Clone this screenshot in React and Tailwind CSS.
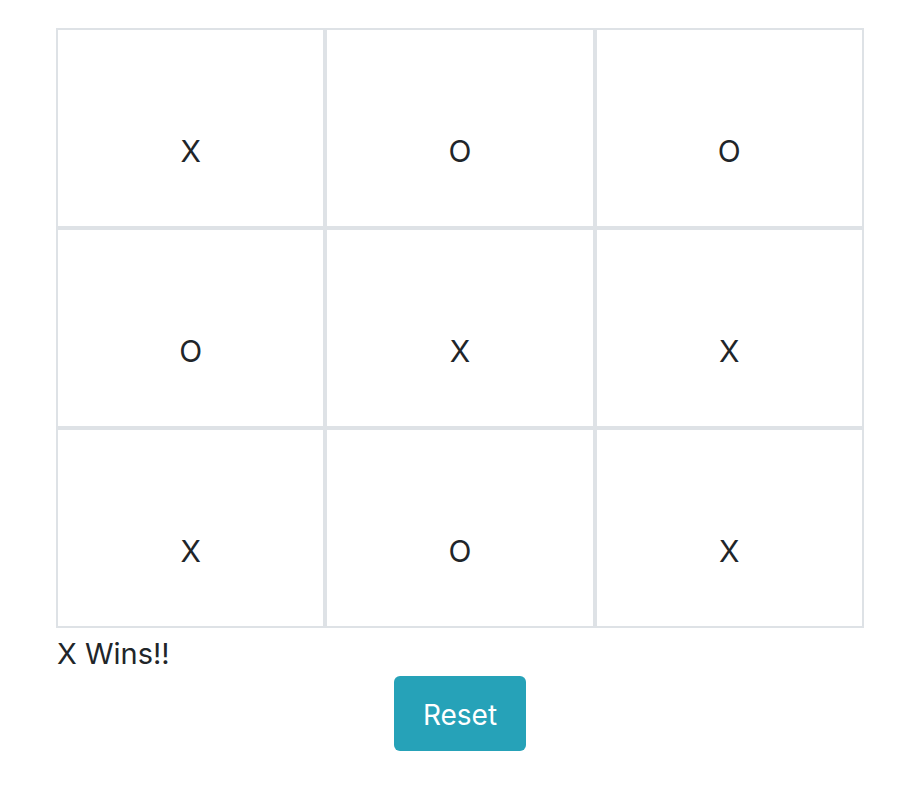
export default function App() {
  const cells = ["X", "O", "O", "O", "X", "X", "X", "O", "X"];
  return (
    <div className="min-h-screen bg-white text-[#212529]" style={{ fontFamily: "Inter, 'Liberation Sans', sans-serif" }}>
      <div className="ml-[56px] w-[808px] pt-[28px]">
        <div className="grid grid-cols-3">
          {cells.map((c, i) => (
            <div key={i} className="h-[200px] border-2 border-[#dee2e6] pt-[99px] text-center text-[30px] leading-[1.5]">
              {c}
            </div>
          ))}
        </div>
        <div className="text-[29px] leading-[1.5] mt-[4px] ml-[1px]">X Wins!!</div>
        <div className="flex justify-center">
          <button className="h-[75px] w-[132px] rounded-[6px] bg-[#26a2b8] pt-[4px] text-white text-[28px] leading-[1.5]">
            Reset
          </button>
        </div>
      </div>
    </div>
  );
}
